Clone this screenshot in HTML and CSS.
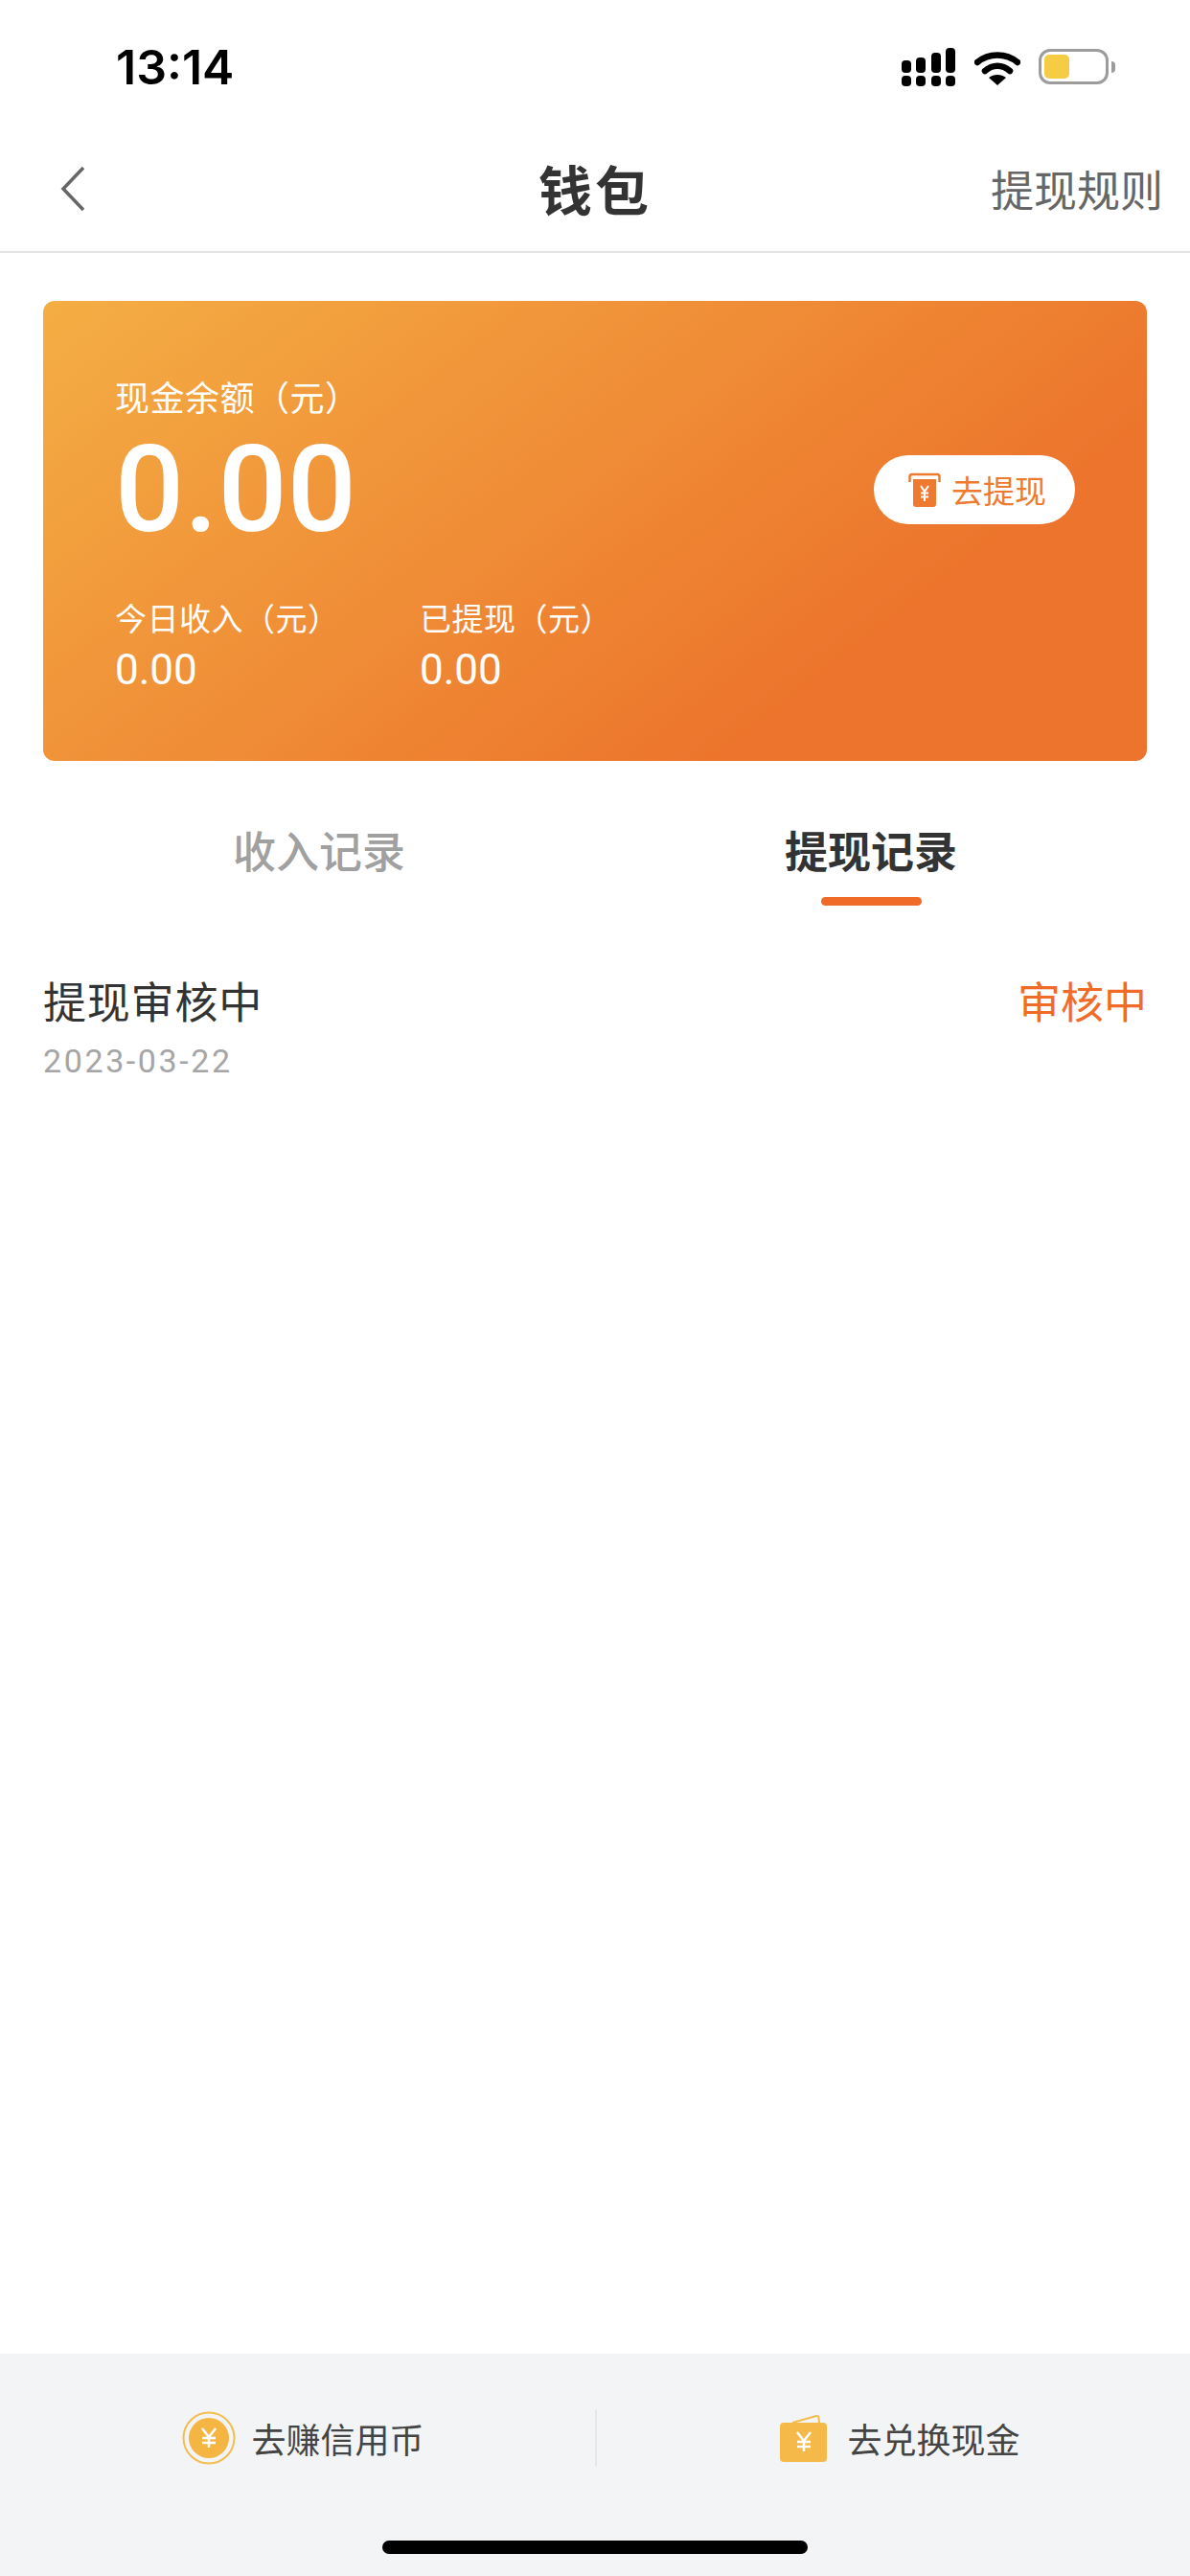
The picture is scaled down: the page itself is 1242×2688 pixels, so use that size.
FILE: index.html
```html
<!DOCTYPE html>
<html lang="zh-CN">
<head>
<meta charset="utf-8">
<title>钱包</title>
<link rel="stylesheet" href="styles.css">
</head>
<body>
<div class="page">
  <header class="status">
    <span class="time">13:14</span>
    <div class="status-icons">
      <svg class="signal" width="58" height="42" viewBox="0 0 58 42" fill="#000">
        <rect x="1" y="14" width="10" height="13" rx="4"/><rect x="1" y="30" width="10" height="11" rx="4"/>
        <rect x="16" y="11" width="10" height="16" rx="4"/><rect x="16" y="30" width="10" height="11" rx="4"/>
        <rect x="32" y="6" width="10" height="21" rx="4"/><rect x="32" y="30" width="10" height="11" rx="4"/>
        <rect x="47" y="1" width="10" height="26" rx="4"/><rect x="47" y="30" width="10" height="11" rx="4"/>
      </svg>
      <svg class="wifi" width="48" height="38" viewBox="0 0 48 38">
        <path d="M3 13C15 3 33 3 45 13" fill="none" stroke="#000" stroke-width="6.5" stroke-linecap="round"/>
        <path d="M11 22C19 15 29 15 37 22" fill="none" stroke="#000" stroke-width="6.5" stroke-linecap="round"/>
        <path d="M24 37L15 29C20 25 28 25 33 29Z" fill="#000"/>
      </svg>
      <div class="battery">
        <div class="battery-body"><div class="battery-fill"></div></div>
        <div class="battery-nub"></div>
      </div>
    </div>
  </header>

  <nav class="nav">
    <svg class="back" width="30" height="50" viewBox="0 0 30 50"><path d="M27 3L6 25L27 47" fill="none" stroke="#666" stroke-width="3.5"/></svg>
    <h1 class="title">钱包</h1>
    <a class="rules">提现规则</a>
  </nav>

  <section class="card">
    <div class="card-main">
      <div>
        <div class="label label-lg">现金余额（元）</div>
        <div class="balance">0.00</div>
      </div>
      <button class="withdraw">
        <svg width="34" height="36" viewBox="0 0 34 36">
          <path d="M1.5 10V4.5Q1.5 2 4 2H30Q32.500 2 32.500 4.500V10" fill="none" stroke="#ee7a30" stroke-width="2.5"/>
          <path d="M5 7H29V33Q29 36 26 36H8Q5 36 5 33Z" fill="#ee7a30"/>
          <path d="M13 14L17 20L21 14M17 20V30M13 21.500H21M13 25.500H21" fill="none" stroke="#fff" stroke-width="2"/>
        </svg>
        <span>去提现</span>
      </button>
    </div>
    <div class="stats">
      <div class="stat">
        <div class="label">今日收入（元）</div>
        <div class="stat-value">0.00</div>
      </div>
      <div class="stat">
        <div class="label">已提现（元）</div>
        <div class="stat-value">0.00</div>
      </div>
    </div>
  </section>

  <div class="tabs">
    <div class="tab">收入记录</div>
    <div class="tab tab-active">提现记录</div>
  </div>

  <div class="record">
    <div>
      <div class="record-title">提现审核中</div>
      <div class="record-date">2023-03-22</div>
    </div>
    <div class="record-status">审核中</div>
  </div>

  <footer class="footer">
    <div class="actions">
      <div class="action">
        <svg width="56" height="56" viewBox="0 0 56 56">
          <circle cx="28" cy="28" r="26.500" fill="none" stroke="#f5bc4e" stroke-width="2"/>
          <circle cx="28" cy="28" r="21" fill="#f5b543"/>
          <path d="M21 18L28 27L35 18M28 27V38M21 28H35M21 33H35" fill="none" stroke="#fff" stroke-width="2.500"/>
        </svg>
        <span>去赚信用币</span>
      </div>
      <div class="action action-right">
        <svg width="50" height="50" viewBox="0 0 50 50">
          <path d="M13 9L38 2Q40 1.500 40.500 4L41 9" fill="none" stroke="#f5bc4e" stroke-width="2"/>
          <rect y="9" width="49" height="41" rx="4" fill="#f5b94a"/>
          <path d="M18 19L25 28L32 19M25 28V39M18 29H32M18 34H32" fill="none" stroke="#fff" stroke-width="2.500"/>
        </svg>
        <span>去兑换现金</span>
      </div>
    </div>
    <div class="home-bar"></div>
  </footer>
</div>
</body>
</html>
```
FILE: styles.css
```css
* { box-sizing: border-box; margin: 0; padding: 0; }
html, body { background: #fff; }
body {
  width: 1242px;
  height: 2688px;
  overflow: hidden;
  font-family: "Noto Sans CJK SC", "Noto Sans", sans-serif;
  color: #333;
}
.page { display: flex; flex-direction: column; height: 2688px; }

.status {
  height: 132px;
  display: flex;
  justify-content: space-between;
  padding: 42px 78px 0 121px;
}
.time {
  font-family: Inter, Roboto, sans-serif;
  font-size: 50px;
  font-weight: 600;
  line-height: 56px;
  color: #000;
}
.status-icons { display: flex; align-items: flex-start; padding-top: 7px; }
.signal { margin-right: 19px; }
.wifi { margin-top: 3px; margin-right: 19px; }
.battery { display: flex; align-items: center; margin-top: 2px; }
.battery-body {
  width: 73px;
  height: 37px;
  border: 3px solid #9c9c9c;
  border-radius: 12px;
  padding: 3px;
}
.battery-fill { width: 26px; height: 100%; background: #f7cc45; border-radius: 5px; }
.battery-nub { width: 4px; height: 12px; margin-left: 3px; background: #9c9c9c; border-radius: 0 4px 4px 0; }

.nav {
  height: 132px;
  display: grid;
  grid-template-columns: 1fr auto 1fr;
  align-items: center;
  padding: 0 28px 0 60px;
  border-bottom: 2px solid #e4e4e4;
}
.back { display: block; margin-top: -1px; }
.title {
  font-size: 56px;
  font-weight: 700;
  line-height: 80px;
  letter-spacing: 3px;
  margin-left: -32px;
  margin-top: -2px;
  color: #333;
}
.rules { justify-self: end; font-size: 45px; line-height: 64px; color: #666; }

.card {
  margin: 50px 45px 0;
  height: 480px;
  padding: 75px 75px 0;
  border-radius: 12px;
  background: linear-gradient(142deg, #f4ae44 0%, #ec742c 75%);
  color: #fff;
}
.card-main { display: flex; justify-content: space-between; align-items: flex-start; }
.label { font-size: 33px; line-height: 44px; letter-spacing: 0.5px; }
.label-lg { font-size: 36px; line-height: 48px; letter-spacing: 0.5px; }
.balance {
  font-family: Roboto, sans-serif;
  font-size: 127px;
  font-weight: 500;
  line-height: 122px;
  margin-top: 13px;
}
.withdraw {
  width: 210px;
  height: 72px;
  margin-top: 86px;
  padding-left: 6px;
  border: 0;
  border-radius: 36px;
  background: #fff;
  display: flex;
  align-items: center;
  justify-content: center;
  gap: 11px;
  color: #ee7a30;
  font: 400 33px "Noto Sans CJK SC", sans-serif;
}
.stats { display: flex; margin-top: 50px; }
.stat { width: 318px; }
.stat-value { font-family: Roboto, sans-serif; font-size: 44px; line-height: 50px; margin-top: 8px; }

.tabs { display: grid; grid-template-columns: 1fr 1fr; padding: 0 45px; margin-top: 60px; height: 100px; }
.tab {
  position: relative;
  text-align: center;
  font-size: 45px;
  font-weight: 500;
  line-height: 66px;
  color: #a0a0a0;
}
.tab-active { color: #333; font-weight: 700; }
.tab-active::after {
  content: "";
  position: absolute;
  left: 50%;
  top: 82px;
  width: 105px;
  height: 9px;
  margin-left: -52px;
  border-radius: 5px;
  background: #f06a28;
}

.record {
  display: flex;
  justify-content: space-between;
  align-items: flex-start;
  padding: 57px 45px 0;
}
.record-title { font-size: 45px; line-height: 66px; letter-spacing: 0.8px; color: #333; }
.record-status { font-size: 45px; line-height: 66px; color: #f06a28; }
.record-date {
  font-family: Roboto, sans-serif;
  font-size: 34px;
  line-height: 44px;
  letter-spacing: 2.6px;
  color: #a5a5a5;
  margin-top: 8px;
}

.footer { margin-top: auto; height: 232px; background: #f3f4f6; }
.actions { display: grid; grid-template-columns: 1fr 1fr; padding-top: 58px; }
.action {
  display: flex;
  align-items: center;
  justify-content: center;
  gap: 16px;
  height: 60px;
  font-size: 36px;
  line-height: 50px;
  color: #444;
  padding-left: 12px;
}
.action-right { border-left: 2px solid #e6e7ea; gap: 20px; padding-left: 14px; }
.home-bar { width: 444px; height: 14px; margin: 77px auto 0; border-radius: 7px; background: #000; }
```
